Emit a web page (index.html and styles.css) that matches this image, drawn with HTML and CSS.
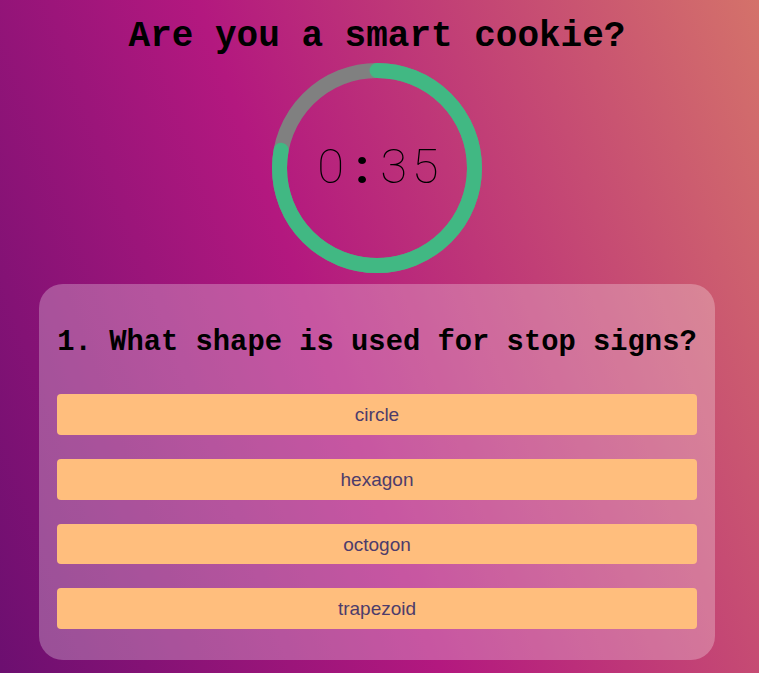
FILE: index.html
```html
<!DOCTYPE html>
<html lang="en">
<head>
<meta charset="utf-8">
<title>Are you a smart cookie?</title>
<link rel="stylesheet" href="styles.css">
</head>
<body>
<div class="app">
  <h1 class="title">Are you a smart cookie?</h1>
  <div class="timer">
    <svg class="timer-ring" width="210" height="210" viewBox="0 0 210 210">
      <circle class="ring-track" cx="105" cy="105" r="97.5"></circle>
      <circle class="ring-left" cx="105" cy="105" r="97.5" stroke-dasharray="476.5 612.6" transform="rotate(-90 105 105)"></circle>
    </svg>
    <span class="timer-label"><span class="digit">0</span><span class="digit colon">:</span><span class="digit">3</span><span class="digit">5</span></span>
  </div>
  <section class="card">
    <h2 class="question">1. What shape is used for stop signs?</h2>
    <div class="answers">
      <button class="answer">circle</button>
      <button class="answer">hexagon</button>
      <button class="answer">octogon</button>
      <button class="answer">trapezoid</button>
    </div>
  </section>
</div>
</body>
</html>
```

FILE: styles.css
```css
html, body {
  margin: 0;
  padding: 0;
}

body {
  min-height: 673px;
  background: linear-gradient(70deg, #6c0f70 0%, #b3187f 44%, #d4726a 100%);
  font-family: "Courier New", "Nimbus Mono PS", "Nimbus Mono L", "FreeMono", "Liberation Mono", monospace;
  color: #000;
  overflow: hidden;
}

.app {
  width: 754px;
  display: flex;
  flex-direction: column;
  align-items: center;
}

.title {
  margin: 16px 0 0;
  font-size: 36px;
  font-weight: bold;
  line-height: normal;
}

.timer {
  margin-top: 6px;
  display: grid;
  width: 210px;
  height: 210px;
  place-items: center;
}

.timer-ring,
.timer-label {
  grid-area: 1 / 1;
}

.ring-track {
  fill: none;
  stroke: #808080;
  stroke-width: 15;
}

.ring-left {
  fill: none;
  stroke: #41b883;
  stroke-width: 15;
  stroke-linecap: round;
}

.timer-label {
  display: flex;
  font-family: "Roboto", "Liberation Sans", sans-serif;
  font-weight: 100;
  font-size: 49px;
  line-height: 1;
  margin-top: -4px;
  margin-left: 2px;
}

.digit {
  width: 31.5px;
  text-align: center;
}

.colon {
  font-weight: 700;
}

.card {
  margin-top: 11px;
  width: 676px;
  box-sizing: border-box;
  padding: 18px 18px 31px;
  border-radius: 24px;
  background: rgba(255, 255, 255, 0.27);
}

.question {
  margin: 24px 0 35.4px;
  font-size: 28.8px;
  font-weight: bold;
  line-height: normal;
  text-align: center;
  white-space: nowrap;
}

.answers {
  display: flex;
  flex-direction: column;
  gap: 24px;
}

.answer {
  display: block;
  width: 100%;
  height: 40.7px;
  padding: 0;
  border: none;
  border-radius: 4px;
  background: #ffbe7d;
  color: #4d3c6b;
  font-family: "Liberation Sans", Arial, sans-serif;
  font-size: 19px;
  line-height: 1;
  cursor: pointer;
}
```
